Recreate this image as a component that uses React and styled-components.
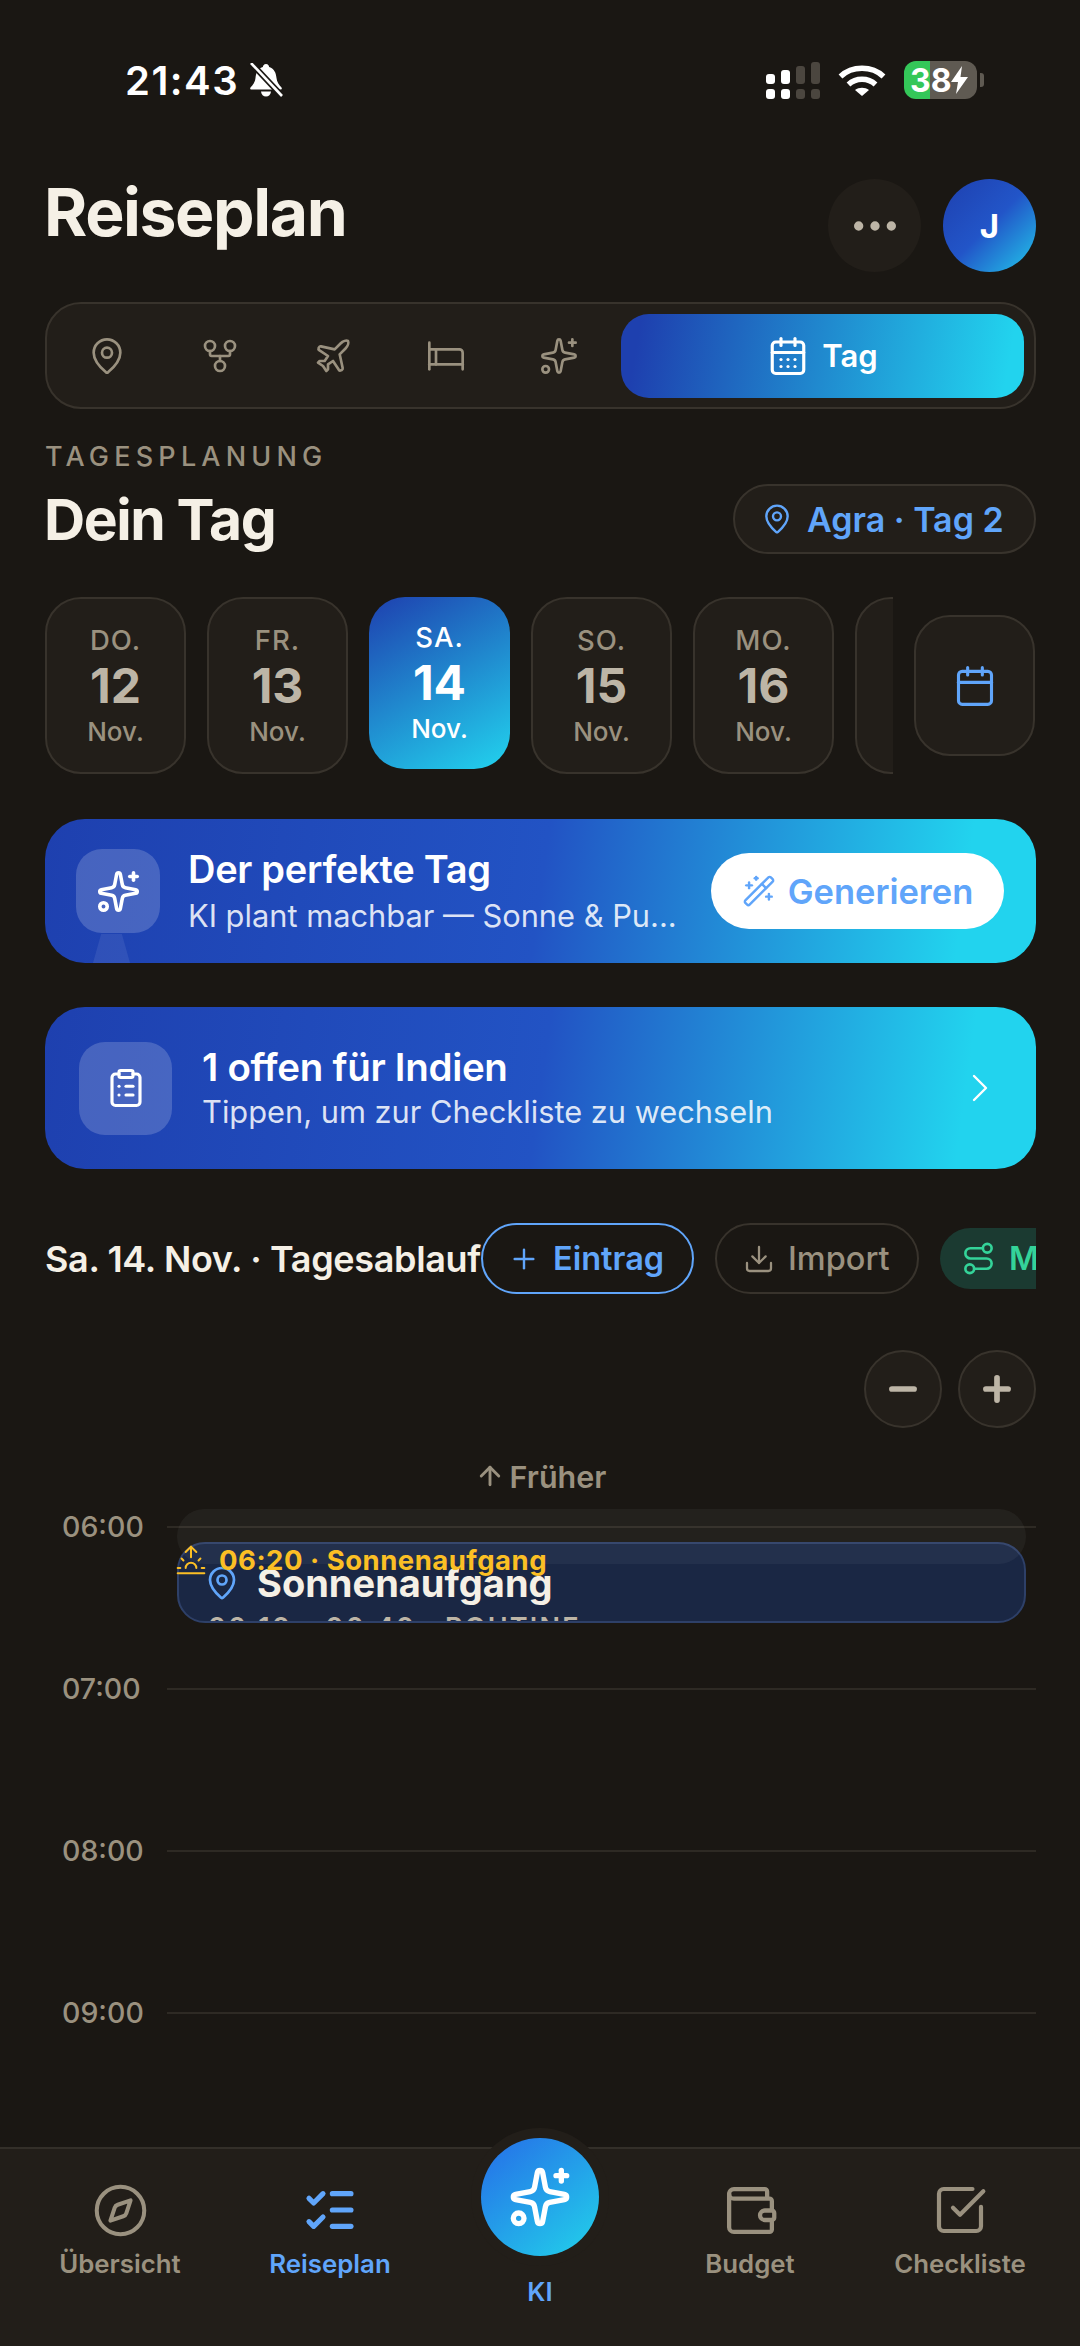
import React from "react";
import styled, { createGlobalStyle } from "styled-components";
import {
  ArrowUp,
  Bed,
  Calendar,
  CalendarDays,
  ChevronRight,
  ClipboardList,
  Compass,
  Download,
  GitFork,
  ListChecks,
  MapPin,
  Minus,
  MoreHorizontal,
  Plane,
  Plus,
  Route,
  Sparkles,
  SquareCheckBig,
  Sunrise,
  Wallet,
  WandSparkles,
} from "lucide-react";

const BLUE = "#60a5fa";
const MUTED = "#9a917f";
const SOFT = "#bdb5a6";
const CREAM = "#f5f0e6";
const BORDER = "#38332c";
const SURFACE = "#221e19";
const PAGE = "#1a1713";

const GlobalStyle = createGlobalStyle`
  html, body {
    margin: 0;
    padding: 0;
    background: ${PAGE};
  }
  * {
    box-sizing: border-box;
  }
`;

const Page = styled.div`
  width: 1080px;
  height: 2346px;
  background: ${PAGE};
  color: ${CREAM};
  font-family: Inter, "Noto Sans", sans-serif;
  display: flex;
  flex-direction: column;
  overflow: hidden;
`;

const StatusBar = styled.div`
  height: 120px;
  padding: 40px 96px 0 125px;
  display: flex;
  align-items: center;
  flex-shrink: 0;
`;

const Clock = styled.span`
  font-size: 40px;
  font-weight: 600;
  color: #fff;
  letter-spacing: 1.5px;
  margin-right: 9px;
`;

const StatusRight = styled.div`
  margin-left: auto;
  display: flex;
  align-items: center;
  gap: 18px;
`;

const Battery = styled.div`
  position: relative;
  width: 73px;
  height: 38px;
  border-radius: 12px;
  overflow: hidden;
  background: linear-gradient(90deg, #34c759 0 36%, #5f5a52 36% 100%);
  display: flex;
  align-items: center;
  padding-left: 6px;
  font-size: 32px;
  font-weight: 700;
  color: #fff;
`;

const BatteryNub = styled.div`
  width: 4px;
  height: 14px;
  margin-left: -15px;
  border-radius: 0 3px 3px 0;
  background: #5f5a52;
`;

const Content = styled.div`
  padding: 0 44px 0 45px;
  flex: 1;
  min-height: 0;
  overflow: hidden;
`;

const HeaderRow = styled.div`
  margin-top: 59px;
  display: flex;
  align-items: center;
  height: 93px;
`;

const Title = styled.h1`
  margin: 0 0 28px -1px;
  font-size: 66px;
  font-weight: 700;
  letter-spacing: -1.4px;
  color: ${CREAM};
  flex: 1;
`;

const RoundButton = styled.div`
  width: ${(p) => p.$size}px;
  height: ${(p) => p.$size}px;
  border-radius: 50%;
  background: ${SURFACE};
  border: ${(p) => (p.$bordered ? `2.5px solid ${BORDER}` : "none")};
  color: ${SOFT};
  display: flex;
  align-items: center;
  justify-content: center;
`;

const Avatar = styled.div`
  width: 93px;
  height: 93px;
  margin-left: 22px;
  border-radius: 50%;
  background: linear-gradient(135deg, #1e40af 0%, #2255c8 50%, #22d3ee 105%);
  color: #fff;
  font-size: 33px;
  font-weight: 700;
  display: flex;
  align-items: center;
  justify-content: center;
`;

const TabBar = styled.div`
  margin-top: 30px;
  height: 107px;
  border: 2.5px solid ${BORDER};
  border-radius: 36px;
  background: ${SURFACE};
  padding: 9.5px 10px 9.5px 3px;
  display: flex;
  align-items: stretch;
`;

const TabSlot = styled.div`
  width: 113px;
  color: ${MUTED};
  display: flex;
  align-items: center;
  justify-content: center;
`;

const ActiveTab = styled.div`
  flex: 1;
  margin-left: 6px;
  border-radius: 28px;
  background: linear-gradient(100deg, #1e40af 5%, #22d3ee 95%);
  color: #fff;
  font-size: 31px;
  font-weight: 600;
  display: flex;
  align-items: center;
  justify-content: center;
  gap: 13px;
`;

const Eyebrow = styled.div`
  margin-top: 33px;
  font-size: 27px;
  line-height: 30px;
  font-weight: 500;
  letter-spacing: 5.2px;
  color: ${MUTED};
`;

const SectionRow = styled.div`
  margin-top: 12px;
  height: 70px;
  display: flex;
  align-items: center;
  justify-content: space-between;
`;

const SectionTitle = styled.h2`
  margin: 0 0 0 -1px;
  font-size: 57px;
  font-weight: 700;
  letter-spacing: -1.4px;
  color: ${CREAM};
`;

const CityPill = styled.div`
  height: 70px;
  width: 303px;
  border: 2.5px solid ${BORDER};
  border-radius: 35px;
  background: ${SURFACE};
  color: ${BLUE};
  font-size: 34px;
  font-weight: 600;
  display: flex;
  align-items: center;
  padding-left: 26px;
  gap: 14px;
  white-space: nowrap;
`;

const DayRow = styled.div`
  margin-top: 43px;
  display: flex;
  align-items: center;
`;

const DayStrip = styled.div`
  width: 848px;
  margin-right: 21px;
  height: 177px;
  display: flex;
  align-items: flex-start;
  gap: 21px;
  overflow: hidden;
  flex-shrink: 0;
`;

const DayCard = styled.div`
  width: 141px;
  height: ${(p) => (p.$active ? 172 : 177)}px;
  flex-shrink: 0;
  border-radius: 36px;
  border: ${(p) => (p.$active ? "none" : `2.5px solid ${BORDER}`)};
  background: ${(p) =>
    p.$active ? "linear-gradient(150deg, #1e40af 0%, #22d3ee 100%)" : SURFACE};
  color: ${(p) => (p.$active ? "#fff" : MUTED)};
  display: flex;
  flex-direction: column;
  align-items: center;
  justify-content: center;
`;

const DayName = styled.div`
  font-size: 27.5px;
  line-height: 36px;
  font-weight: 500;
  letter-spacing: 1px;
`;

const DayNumber = styled.div`
  font-size: 48px;
  line-height: 56px;
  font-weight: 700;
  color: ${(p) => (p.$active ? "#fff" : SOFT)};
`;

const DayMonth = styled.div`
  font-size: 26px;
  line-height: 36px;
  font-weight: 500;
`;

const CalendarButton = styled.div`
  width: 121px;
  height: 141px;
  border-radius: 36px;
  border: 2.5px solid ${BORDER};
  background: ${SURFACE};
  color: ${BLUE};
  display: flex;
  align-items: center;
  justify-content: center;
`;

const Banner = styled.div`
  position: relative;
  margin-top: ${(p) => p.$top}px;
  height: ${(p) => p.$height}px;
  padding: 0 32px 0 ${(p) => p.$left}px;
  border-radius: 40px;
  background: linear-gradient(98deg, #1e40af 0%, #2253c4 50%, #22d3ee 92%);
  display: flex;
  align-items: center;
  overflow: hidden;
`;

const BannerIcon = styled.div`
  width: ${(p) => p.$size}px;
  height: ${(p) => p.$size}px;
  border-radius: 26px;
  background: rgba(255, 255, 255, 0.18);
  color: #fff;
  display: flex;
  align-items: center;
  justify-content: center;
  flex-shrink: 0;
`;

const IconGlow = styled.div`
  position: absolute;
  left: 48px;
  bottom: 0;
  width: 37px;
  height: 29px;
  background: rgba(255, 255, 255, 0.08);
  clip-path: polygon(22% 0, 78% 0, 100% 100%, 0 100%);
`;

const BannerText = styled.div`
  flex: 1;
  min-width: 0;
  margin-left: ${(p) => p.$gap}px;
  color: #fff;
`;

const BannerTitle = styled.div`
  font-size: ${(p) => p.$size}px;
  line-height: 46px;
  font-weight: 600;
  letter-spacing: -0.3px;
`;

const BannerSub = styled.div`
  margin-top: ${(p) => p.$top}px;
  font-size: 30.8px;
  line-height: 40px;
  font-weight: 400;
  color: rgba(255, 255, 255, 0.85);
  white-space: nowrap;
`;

const GenerateButton = styled.div`
  width: 293px;
  height: 76px;
  border-radius: 38px;
  background: #fff;
  color: ${BLUE};
  font-size: 34.5px;
  font-weight: 600;
  display: flex;
  align-items: center;
  justify-content: center;
  gap: 12px;
  flex-shrink: 0;
`;

const ChevronBox = styled.div`
  color: #fff;
  display: flex;
`;

const ActionRow = styled.div`
  margin-top: 54px;
  height: 71px;
  display: flex;
  align-items: center;
  overflow: hidden;
`;

const ActionTitle = styled.div`
  width: 436px;
  flex-shrink: 0;
  font-size: 36px;
  font-weight: 600;
  letter-spacing: -0.35px;
  color: ${CREAM};
  white-space: nowrap;
`;

const ActionPill = styled.div`
  height: ${(p) => (p.$tone === "green" ? 61 : 71)}px;
  width: ${(p) => p.$width}px;
  margin-right: 21px;
  flex-shrink: 0;
  border-radius: 36px;
  border: ${(p) =>
    p.$tone === "blue"
      ? `2.5px solid ${BLUE}`
      : p.$tone === "green"
      ? "none"
      : `2.5px solid ${BORDER}`};
  background: ${(p) => (p.$tone === "green" ? "#1b3a31" : "transparent")};
  color: ${(p) =>
    p.$tone === "blue" ? BLUE : p.$tone === "green" ? "#34d399" : MUTED};
  font-size: 32.5px;
  font-weight: ${(p) => (p.$tone === "neutral" ? 500 : 600)};
  display: flex;
  align-items: center;
  padding-left: ${(p) => p.$pad}px;
  gap: 13px;
`;

const ZoomRow = styled.div`
  margin-top: 56px;
  display: flex;
  justify-content: flex-end;
  gap: 16px;
`;

const EarlierLink = styled.div`
  margin-top: 31px;
  height: 34px;
  color: ${MUTED};
  font-size: 30.5px;
  font-weight: 600;
  display: flex;
  align-items: center;
  justify-content: center;
  gap: 5px;
`;

const Timeline = styled.div`
  position: relative;
  margin-top: 16px;
`;

const HourRow = styled.div`
  height: 162px;
  display: flex;
  align-items: flex-start;
`;

const HourLabel = styled.div`
  width: 122px;
  padding-left: 17px;
  height: 36px;
  line-height: 36px;
  font-size: 28.5px;
  font-weight: 500;
  color: ${MUTED};
  flex-shrink: 0;
`;

const HourLine = styled.div`
  flex: 1;
  height: 2px;
  margin-top: 17px;
  background: #2e2a24;
`;

const EventCard = styled.div`
  position: absolute;
  left: 132px;
  right: 10px;
  top: 33px;
  height: 81px;
  border-radius: 28px;
  border: 2.5px solid #2e4068;
  background: #1a2744;
  overflow: hidden;
  padding: 20px 0 0 25px;
`;

const EventHead = styled.div`
  display: flex;
  align-items: center;
  gap: 17px;
  height: 38px;
  color: ${CREAM};
  font-size: 38px;
  font-weight: 700;
`;

const EventMeta = styled.div`
  margin: 11px 0 0 4px;
  font-size: 27px;
  line-height: 30px;
  font-weight: 600;
  letter-spacing: 2.2px;
  color: ${SOFT};
  white-space: nowrap;
`;

const SunBand = styled.div`
  position: absolute;
  left: 132px;
  right: 10px;
  top: 0;
  height: 55px;
  border-radius: 28px;
  background: rgba(255, 255, 255, 0.045);
`;

const SunLabel = styled.div`
  position: absolute;
  left: 130px;
  top: 35px;
  height: 32px;
  display: flex;
  align-items: center;
  gap: 12px;
  color: #fbbf24;
  font-size: 27.5px;
  font-weight: 700;
  letter-spacing: 0.5px;
  white-space: nowrap;
`;

const BottomNav = styled.nav`
  height: 199px;
  flex-shrink: 0;
  background: ${SURFACE};
  border-top: 2px solid #332f29;
  padding: 0 15px;
  display: grid;
  grid-template-columns: repeat(5, 210px);
  align-items: start;
`;

const NavItem = styled.div`
  padding-top: 35px;
  display: flex;
  flex-direction: column;
  align-items: center;
  gap: 13px;
  color: ${(p) => (p.$active ? BLUE : MUTED)};
  font-size: 25.8px;
  line-height: 30px;
  font-weight: 600;
`;

const NavIcon = styled.div`
  height: 52px;
  display: flex;
  align-items: center;
`;

const KiItem = styled.div`
  margin-top: -11px;
  display: flex;
  flex-direction: column;
  align-items: center;
  gap: 21px;
  color: ${BLUE};
  font-size: 25.8px;
  line-height: 30px;
  font-weight: 600;
`;

const KiButton = styled.div`
  width: 118px;
  height: 118px;
  border-radius: 50%;
  background: linear-gradient(140deg, #2577e8 10%, #22cdea 95%);
  box-shadow: 0 0 0 10px ${SURFACE};
  color: #fff;
  display: flex;
  align-items: center;
  justify-content: center;
`;

const days = [
  { name: "DO.", number: 12 },
  { name: "FR.", number: 13 },
  { name: "SA.", number: 14, active: true },
  { name: "SO.", number: 15 },
  { name: "MO.", number: 16 },
  { name: "DI.", number: 17 },
];

const hours = ["06:00", "07:00", "08:00", "09:00"];

const BellMuted = () => (
  <svg width="36" height="35" viewBox="0 0 36 35" fill="#fff">
    <path d="M18 1c-2 0-3 1.500-3.200 3C9.500 6 8 10 7.500 15c-.3 4-2.500 7-5 9.500-.7 1-.2 2 1 2h29c1.200 0 1.700-1 1-2-2.500-2.500-4.700-5.500-5-9.500-.5-5-2-9-7.300-11C21 2.500 20 1 18 1z" />
    <path d="M13 28.500h10c-.3 3-2.300 5-5 5s-4.700-2-5-5z" />
    <path d="M3 0L34 33" stroke={PAGE} strokeWidth="6" />
    <path d="M3 0L34 33" stroke="#fff" strokeWidth="2.600" />
  </svg>
);

const SignalIcon = () => (
  <svg width="54" height="37" viewBox="0 0 54 37" fill="#fff">
    <rect x="0" y="12" width="9" height="10" rx="3" />
    <rect x="15" y="8" width="9" height="14" rx="3" />
    <rect x="30" y="4" width="9" height="18" rx="3" fill="#4b463f" />
    <rect x="45" y="0" width="9" height="22" rx="3" fill="#4b463f" />
    <rect x="0" y="27" width="9" height="10" rx="3" />
    <rect x="15" y="27" width="9" height="10" rx="3" />
    <rect x="30" y="27" width="9" height="10" rx="3" fill="#4b463f" />
    <rect x="45" y="27" width="9" height="10" rx="3" fill="#4b463f" />
  </svg>
);

const WifiIcon = () => (
  <svg width="48" height="34" viewBox="0 0 48 34" fill="none" stroke="#fff" strokeWidth="5.5">
    <path d="M2.500 13.500C14 2.500 34 2.500 45.500 13.500" />
    <path d="M10.500 21.500C18 14.500 30 14.500 37.500 21.500" />
    <path d="M17 27C21 24 27 24 31 27L24 33Z" fill="#fff" stroke="none" />
  </svg>
);

const BoltIcon = () => (
  <svg width="17" height="28" viewBox="0 0 17 28" fill="#fff">
    <path d="M11 0L0 16h7l-2 12L17 11H9.500z" />
  </svg>
);

export default function App() {
  return (
    <Page>
      <GlobalStyle />
      <StatusBar>
        <Clock>21:43</Clock>
        <BellMuted />
        <StatusRight>
          <SignalIcon />
          <WifiIcon />
          <Battery>
            38
            <BoltIcon />
          </Battery>
          <BatteryNub />
        </StatusRight>
      </StatusBar>

      <Content>
        <HeaderRow>
          <Title>Reiseplan</Title>
          <RoundButton $size={93}>
            <MoreHorizontal size={56} strokeWidth={2} />
          </RoundButton>
          <Avatar>J</Avatar>
        </HeaderRow>

        <TabBar>
          <TabSlot><MapPin size={40} strokeWidth={1.6} /></TabSlot>
          <TabSlot><GitFork size={40} strokeWidth={1.6} /></TabSlot>
          <TabSlot><Plane size={40} strokeWidth={1.6} /></TabSlot>
          <TabSlot><Bed size={40} strokeWidth={1.6} /></TabSlot>
          <TabSlot><Sparkles size={40} strokeWidth={1.6} /></TabSlot>
          <ActiveTab>
            <CalendarDays size={42} strokeWidth={1.8} />
            Tag
          </ActiveTab>
        </TabBar>

        <Eyebrow>TAGESPLANUNG</Eyebrow>
        <SectionRow>
          <SectionTitle>Dein Tag</SectionTitle>
          <CityPill>
            <MapPin size={32} strokeWidth={1.8} />
            Agra · Tag 2
          </CityPill>
        </SectionRow>

        <DayRow>
          <DayStrip>
            {days.map((day) => (
              <DayCard key={day.number} $active={day.active}>
                <DayName>{day.name}</DayName>
                <DayNumber $active={day.active}>{day.number}</DayNumber>
                <DayMonth>Nov.</DayMonth>
              </DayCard>
            ))}
          </DayStrip>
          <CalendarButton>
            <Calendar size={44} strokeWidth={1.7} />
          </CalendarButton>
        </DayRow>

        <Banner $top={45} $height={144} $left={31}>
          <BannerIcon $size={84}>
            <Sparkles size={45} strokeWidth={1.9} />
          </BannerIcon>
          <IconGlow />
          <BannerText $gap={28}>
            <BannerTitle $size={38}>Der perfekte Tag</BannerTitle>
            <BannerSub $top={4}>KI plant machbar — Sonne &amp; Pu...</BannerSub>
          </BannerText>
          <GenerateButton>
            <WandSparkles size={34} strokeWidth={1.7} />
            Generieren
          </GenerateButton>
        </Banner>

        <Banner $top={44} $height={162} $left={34}>
          <BannerIcon $size={93}>
            <ClipboardList size={42} strokeWidth={1.8} />
          </BannerIcon>
          <BannerText $gap={30}>
            <BannerTitle $size={38.5}>1 offen für Indien</BannerTitle>
            <BannerSub $top={2}>Tippen, um zur Checkliste zu wechseln</BannerSub>
          </BannerText>
          <ChevronBox>
            <ChevronRight size={48} strokeWidth={1.2} />
          </ChevronBox>
        </Banner>

        <ActionRow>
          <ActionTitle>Sa. 14. Nov. · Tagesablauf</ActionTitle>
          <ActionPill $tone="blue" $width={213} $pad={25}>
            <Plus size={32} strokeWidth={1.8} />
            Eintrag
          </ActionPill>
          <ActionPill $tone="neutral" $width={204} $pad={26}>
            <Download size={32} strokeWidth={1.7} />
            Import
          </ActionPill>
          <ActionPill $tone="green" $width={180} $pad={21}>
            <Route size={35} strokeWidth={1.8} />
            Map
          </ActionPill>
        </ActionRow>

        <ZoomRow>
          <RoundButton $size={78} $bordered>
            <Minus size={38} strokeWidth={3.6} />
          </RoundButton>
          <RoundButton $size={78} $bordered>
            <Plus size={38} strokeWidth={3.6} />
          </RoundButton>
        </ZoomRow>

        <EarlierLink>
          <ArrowUp size={30} strokeWidth={2.3} />
          Früher
        </EarlierLink>

        <Timeline>
          {hours.map((hour) => (
            <HourRow key={hour}>
              <HourLabel>{hour}</HourLabel>
              <HourLine />
            </HourRow>
          ))}
          <EventCard>
            <EventHead>
              <MapPin size={36} color={BLUE} strokeWidth={1.8} />
              Sonnenaufgang
            </EventHead>
            <EventMeta>06:10 – 06:40 · ROUTINE</EventMeta>
          </EventCard>
          <SunBand />
          <SunLabel>
            <Sunrise size={32} strokeWidth={1.5} />
            06:20 · Sonnenaufgang
          </SunLabel>
        </Timeline>
      </Content>

      <BottomNav>
        <NavItem>
          <NavIcon><Compass size={57} strokeWidth={1.7} /></NavIcon>
          Übersicht
        </NavItem>
        <NavItem $active>
          <NavIcon><ListChecks size={56} strokeWidth={2.2} /></NavIcon>
          Reiseplan
        </NavItem>
        <KiItem>
          <KiButton>
            <Sparkles size={64} strokeWidth={2} />
          </KiButton>
          KI
        </KiItem>
        <NavItem>
          <NavIcon><Wallet size={57} strokeWidth={1.8} /></NavIcon>
          Budget
        </NavItem>
        <NavItem>
          <NavIcon><SquareCheckBig size={56} strokeWidth={1.8} /></NavIcon>
          Checkliste
        </NavItem>
      </BottomNav>
    </Page>
  );
}
